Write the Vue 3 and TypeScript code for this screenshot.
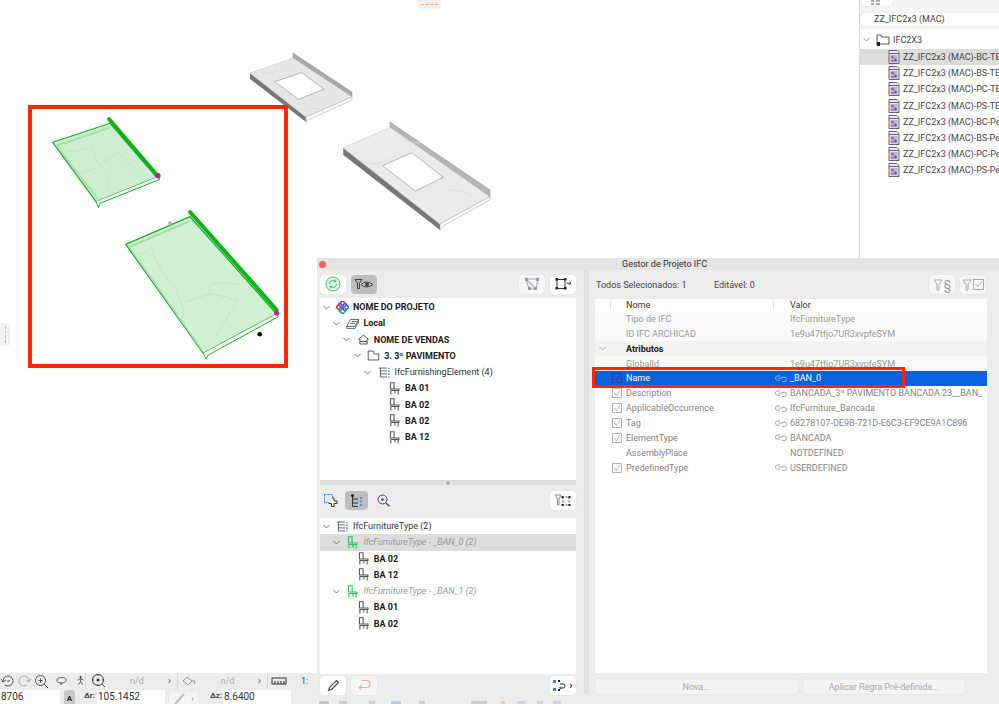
<template>
  <div class="desktop">
    <!-- svg sprites -->
    <svg class="sprites" width="0" height="0">
      <defs>
        <symbol id="i-chair" viewBox="0 0 16 16">
          <path d="M3 1h4.500v7.500H3zM3 8.500h10.500v2H3M3.500 10.500v5M12.500 10.500v5M8.500 10.500v3.500" fill="none" stroke="currentColor" stroke-width="1.300" />
        </symbol>
        <symbol id="i-type" viewBox="0 0 16 16">
          <path d="M1 2.500h10M3 2.500v11h8M3 6h8M3 9.700h8" fill="none" stroke="#555" stroke-width="1.100" />
          <path d="M13.500 2v12" fill="none" stroke="#2b7de9" stroke-width="1.600" stroke-dasharray="2 1.500" />
        </symbol>
        <symbol id="i-land" viewBox="0 0 16 16">
          <path d="M1 11.500 5.500 3h10L11 11.500zM1 11.500v2.500h10l4.500-8V3M5 8h6M7 5.500h6" fill="none" stroke="#444" stroke-width="1" />
        </symbol>
        <symbol id="i-build" viewBox="0 0 16 16">
          <path d="M1.500 8 8 2.500 14.500 8M3.500 7v6.500h9V7M3.500 10.500h9" fill="none" stroke="#444" stroke-width="1.100" />
        </symbol>
        <symbol id="i-floor" viewBox="0 0 16 16">
          <path d="M1.500 2.500h6l1.500 3.500h5.500v7.500h-13z" fill="none" stroke="#444" stroke-width="1.100" />
        </symbol>
        <symbol id="i-logo" viewBox="0 0 16 16">
          <rect x="1.500" y="4" width="7" height="7" rx="1.500" transform="rotate(45 5 7.500)" fill="none" stroke="#e0324b" stroke-width="2" />
          <rect x="7.500" y="4" width="7" height="7" rx="1.500" transform="rotate(45 11 7.500)" fill="none" stroke="#2767d8" stroke-width="2" />
          <rect x="4.500" y="1" width="7" height="7" rx="1.500" transform="rotate(45 8 4.500)" fill="none" stroke="#a033b8" stroke-width="2" />
          <rect x="4.500" y="7.500" width="7" height="7" rx="1.500" transform="rotate(45 8 11)" fill="none" stroke="#19a8a0" stroke-width="2" />
        </symbol>
        <symbol id="i-lib" viewBox="0 0 12 14">
          <path d="M1 .5h8l2 2v11H1z" fill="#e8e8e8" stroke="#666" stroke-width="1" />
          <path d="M1 3.500h10" stroke="#666" stroke-width="1" />
          <rect x="2.500" y="5" width="7" height="7.500" fill="#b9b4d8" />
          <circle cx="4.500" cy="7" r="1.500" fill="#d94aa0" />
          <circle cx="7.500" cy="10" r="1.500" fill="#4a6ad9" />
          <circle cx="4.500" cy="11" r="1" fill="#d94a60" />
        </symbol>
        <symbol id="i-link" viewBox="0 0 14 8">
          <path d="M6 1H3a2.500 2.500 0 0 0 0 5h3M4 3.500h5M8 2.500h3a2.500 2.500 0 0 1 0 5H8" fill="none" stroke="currentColor" stroke-width="1" />
        </symbol>
        <symbol id="i-funnel" viewBox="0 0 10 12">
          <path d="M1 1h8L6 5.500V11H4V5.500z" fill="none" stroke="currentColor" stroke-width="1" />
        </symbol>
      </defs>
    </svg>

    <!-- 3D viewport -->
    <svg class="canvas" width="999" height="704" viewBox="0 0 999 704">
      <!-- grey counters -->
      <g>
        <path d="M293 53 352 92v5L293 58z" fill="#a9a9a9" stroke="#8f8f8f" stroke-width=".5" />
        <path d="M250 73v6l56 43v-5z" fill="#777" />
        <path d="M250 73 293 58 352 97 306 117z" fill="#e6e6e6" stroke="#c9c9c9" stroke-width=".6" />
        <path d="M306 117 352 97v3l-44 20-2 2z" fill="#fff" stroke="#aaa" stroke-width=".6" />
        <path d="M274.700 81.700 301.700 72.700 324.300 89.300 298.300 99.300z" fill="#fff" stroke="#999" stroke-width=".7" />
        <path d="M262 72q6 4 14-2M310 108q8 0 14 4" fill="none" stroke="#d6d6d6" stroke-width=".7" />
      </g>
      <g>
        <path d="M390 122 490 190v7L390 127z" fill="#b5b5b5" stroke="#8f8f8f" stroke-width=".5" />
        <path d="M343.300 148v7L440 230v-6z" fill="#777" />
        <path d="M343.300 147.700 390 127.300 490 196.700 440 224z" fill="#ebebeb" stroke="#c9c9c9" stroke-width=".6" />
        <path d="M440 224 490 196.700v3L443 226l-3 4z" fill="#fff" stroke="#aaa" stroke-width=".6" />
        <path d="M382.700 165.700 412 152.700 443.300 177.300 415.300 191z" fill="#fff" stroke="#999" stroke-width=".7" />
        <path d="M360 160q20 10 35-5M450 190q15 0 25 8M400 135q5 8 20 8" fill="none" stroke="#dcdcdc" stroke-width=".8" />
      </g>

      <!-- selected green counters -->
      <g stroke="#12b21a" fill="none" stroke-linejoin="round">
        <path d="M52.700 142.300 110 123.300 156.700 177.300 96 201.700z" fill="#cdeed0" stroke-width="1.200" />
        <path d="M56 146 110 127.500" stroke="#a4dfa8" stroke-width="2" />
        <path d="M57 146 98 199" stroke="#a4dfa8" stroke-width="1.500" />
        <path d="M66 152q14 0 26-6 2 12 8 19l18-12M100 165q12 12 8 25M118 153l22 22M70 176l26-8" stroke="#bcd8c0" stroke-width=".6" />
        <path d="M109 119 157 175" stroke-width="3.800" stroke-linecap="round" />
        <path d="M96 201.700 98.700 207.700 100 203.300 160 179.300 157 177.300" fill="#fff" stroke-width="1" />
      </g>
      <g stroke="#12b21a" fill="none" stroke-linejoin="round">
        <path d="M125.700 244.300 190 216.700 276.700 314 203.300 353.300z" fill="#d0f0d4" stroke-width="1.300" />
        <path d="M129 247 190 221" stroke="#a4dfa8" stroke-width="2" />
        <path d="M130 248 202 350" stroke="#a4dfa8" stroke-width="1.500" />
        <path d="M138 254q12-1 14-10M152 250q8 22 24 40 6 14 8 22M186 302q16-6 24-8 14 2 28 6l-22 36M210 294q-2-8 2-10 10-2 28 0M184 312l-4 16" stroke="#bed9c2" stroke-width=".6" />
        <path d="M190 212 276.700 310" stroke-width="4" stroke-linecap="round" />
        <path d="M203.300 353.300 206 359.300 208.300 355 278.300 316.700 276.700 314" fill="#fff" stroke-width="1" />
      </g>
      <circle cx="158" cy="175.700" r="2.600" fill="#c813b8" />
      <circle cx="276.700" cy="313" r="2.600" fill="#c813b8" />
      <circle cx="259.700" cy="334.300" r="2.300" fill="#000" />
      <circle cx="170" cy="223.300" r="2" fill="#bbb" />
    </svg>

    <div class="handle handle-top"><span></span></div>
    <div class="handle handle-left"><span></span></div>

    <!-- library navigator, top right -->
    <aside class="navigator">
      <div class="nav-head">
        <div class="nav-btn">
          <svg width="10" height="6" viewBox="0 0 10 6"><path d="M0 1h3M0 4h3M5 1h4M5 4h4" stroke="#555" fill="none" /></svg>
        </div>
        <div class="nav-search">ZZ_IFC2x3 (MAC)</div>
      </div>
      <div class="nav-folder">
        <svg class="chev" width="7" height="5" viewBox="0 0 7 5"><path d="M.5 1 3.500 4 6.500 1" fill="none" stroke="#888" /></svg>
        <svg class="folder" width="14" height="14" viewBox="0 0 14 14"><path d="M1 2h4l1 2h7v7H3M1 2v10" fill="none" stroke="#555" /><rect x="1" y="9" width="3" height="4" fill="#222" /></svg>
        <span>IFC2X3</span>
      </div>
      <div v-for="(lib, i) in libraries" :key="lib" class="nav-row" :class="{ picked: i === 0 }">
        <svg class="nav-lib" width="12" height="14"><use href="#i-lib" /></svg>
        <span>{{ lib }}</span>
      </div>
    </aside>

    <!-- bottom left status panel -->
    <div class="status">
      <div class="status-top">
        <div class="st-group">
          <svg width="15" height="14" viewBox="0 0 15 14"><path d="M3 7a5 5 0 1 1 2 4M1 5l2 3 3-2M7 7h3" fill="none" stroke="#555" /></svg>
          <svg width="15" height="14" viewBox="0 0 15 14"><path d="M12 7a5 5 0 1 0-2 4M14 5l-2 3-3-2" fill="none" stroke="#aaa" /></svg>
          <svg width="15" height="14" viewBox="0 0 15 14"><circle cx="6.500" cy="6.500" r="5" fill="none" stroke="#555" /><path d="M10 10l4 4M4.500 6.500h4M6.500 4.500v4" fill="none" stroke="#555" /></svg>
        </div>
        <div class="st-group st-second">
          <svg width="14" height="12" viewBox="0 0 14 12"><ellipse cx="7" cy="5" rx="6" ry="3.500" fill="none" stroke="#444" /><path d="M5 8l2 3 1-3" fill="none" stroke="#444" /></svg>
          <svg width="12" height="13" viewBox="0 0 12 13"><circle cx="6" cy="2" r="1.300" fill="#333" /><path d="M6 4v4L3 12M6 8l3 4M2 6l4-2 4 2" fill="none" stroke="#333" /></svg>
        </div>
        <div class="st-group st-third">
          <svg width="15" height="15" viewBox="0 0 15 15"><circle cx="7" cy="7" r="5.500" fill="none" stroke="#444" /><circle cx="7" cy="7" r="1.500" fill="#333" /><path d="M11 11l3 3M7 1v2M7 11v2M1 7h2M11 7h2" stroke="#444" fill="none" /></svg>
          <span class="nd">n/d</span>
          <span class="more">›</span>
        </div>
        <div class="st-group st-fourth">
          <svg width="15" height="12" viewBox="0 0 15 12"><path d="M1 6l4-4 5 4-4 4zM10 6h3l-1 3" fill="none" stroke="#999" /></svg>
          <span class="nd">n/d</span>
          <span class="more">›</span>
        </div>
        <div class="st-group st-fifth">
          <svg width="16" height="8" viewBox="0 0 16 8"><rect x="1" y="1" width="14" height="6" fill="none" stroke="#333" /><path d="M4 4v3M7 4v3M10 4v3M13 4v3" stroke="#333" /></svg>
          <span class="scale">1:</span>
        </div>
      </div>
      <div class="status-low">
        <div class="st-field st-first">8706</div>
        <div class="st-a">A</div>
        <span class="st-label">Δr:</span>
        <div class="st-field st-wide">105.1452</div>
        <div class="st-tool">
          <svg width="12" height="12" viewBox="0 0 12 12"><path d="M1 11 10 1" stroke="#bbb" stroke-width="2" /></svg>
          <span>›</span>
        </div>
        <span class="st-label">Δz:</span>
        <div class="st-field st-wide">8.6400</div>
      </div>
    </div>

    <!-- IFC project manager -->
    <section class="manager">
      <header class="manager-title">
        <i class="close-dot"></i>
        <span>Gestor de Projeto IFC</span>
      </header>
      <div class="manager-body">
        <div class="left-pane">
          <div class="toolbar">
            <button class="tool">
              <svg width="16" height="16" viewBox="0 0 16 16"><circle cx="8" cy="8" r="7" fill="#e7f8ea" stroke="#3cc46a" /><path d="M4.500 8a3.500 3.500 0 0 1 6-2.500M11.500 8a3.500 3.500 0 0 1-6 2.500M10.700 3.500v2.200H8.500M5.300 12.500v-2.200h2.200" fill="none" stroke="#3cc46a" /></svg>
            </button>
            <button class="tool pressed">
              <svg width="20" height="10" viewBox="0 0 20 10"><path d="M1 .5h7L5.500 4v5.500h-2V4z" fill="none" stroke="#444" /><path d="M7 5.500q5-5 12 0-7 5-12 0z" fill="none" stroke="#444" /><circle cx="13" cy="5.500" r="2" fill="#444" /></svg>
            </button>
            <div class="spacer"></div>
            <button class="tool dim">
              <svg width="16" height="14" viewBox="0 0 16 14"><path d="M2 2h12l-2 10H5z" fill="none" stroke="#aaa" /><path d="M2 2l9 9" stroke="#9dbcf0" stroke-width="1.500" /><g fill="#999"><rect x="1" y="1" width="3" height="3" /><rect x="12" y="1" width="3" height="3" /><rect x="4" y="10" width="3" height="3" /><rect x="10" y="10" width="3" height="3" /></g></svg>
            </button>
            <button class="tool">
              <svg width="18" height="14" viewBox="0 0 18 14"><path d="M3 2.500h9M3 11.500h9M3 2.500v9M11 2.500v9" fill="none" stroke="#333" /><g fill="#222"><rect x="1.500" y="1" width="2.500" height="2.500" /><rect x="10" y="1" width="2.500" height="2.500" /><rect x="1.500" y="10" width="2.500" height="2.500" /><rect x="10" y="10" width="2.500" height="2.500" /></g><path d="M13 6q2 2 4 0M15.500 5l1.500 1-1 1.500" fill="none" stroke="#333" /></svg>
            </button>
          </div>
          <div class="tree tree-top">
            <div v-for="row in topTree" :key="row.key" class="tree-row" :style="{ paddingLeft: row.level * 10.4 + 'px' }">
              <span class="tree-chev">
                <svg v-if="row.open" width="7" height="5" viewBox="0 0 7 5"><path d="M.5 1 3.500 4 6.500 1" fill="none" stroke="#777" /></svg>
              </span>
              <span class="tree-icon"><svg width="13" height="13"><use :href="'#' + row.icon" /></svg></span>
              <span :class="row.bold ? 'strong' : 'plain'">{{ row.label }}</span>
            </div>
          </div>
          <div class="split-bar"><i></i></div>
          <div class="toolbar toolbar-low">
            <button class="tool flat">
              <svg width="15" height="15" viewBox="0 0 15 15"><rect x="1.500" y="1.500" width="8" height="8" fill="none" stroke="#2b7de9" stroke-dasharray="2 1" /><path d="M9 5h2v3h3v2.500h-3v3H8.500v-3h-3" fill="#fff" stroke="#333" /></svg>
            </button>
            <button class="tool pressed small">
              <svg width="13" height="14" viewBox="0 0 13 14"><path d="M2.500 1v11.500H8M2.500 5H8M2.500 9H8" fill="none" stroke="#333" /><circle cx="2.500" cy="1.500" r="1.500" fill="#222" /><path d="M11 3v9" stroke="#2b7de9" stroke-width="1.500" stroke-dasharray="2 1.500" /></svg>
            </button>
            <button class="tool flat">
              <svg width="13" height="13" viewBox="0 0 13 13"><circle cx="5.500" cy="5.500" r="4.500" fill="none" stroke="#444" /><circle cx="5.500" cy="5.500" r="1.500" fill="#2b7de9" /><path d="M9 9l3.500 3.500" stroke="#444" stroke-width="1.300" /></svg>
            </button>
            <div class="spacer"></div>
            <button class="tool">
              <svg width="18" height="14" viewBox="0 0 18 14"><path d="M1 1h6L5 5v6H3.500V5z" fill="none" stroke="#888" /><path d="M8 3h8M8 11h8M9 3v8M15 3v8" fill="none" stroke="#444" stroke-dasharray="2 1.500" /><g fill="#222"><rect x="7.500" y="2" width="2" height="2" /><rect x="14.500" y="2" width="2" height="2" /><rect x="7.500" y="10" width="2" height="2" /><rect x="14.500" y="10" width="2" height="2" /></g></svg>
            </button>
          </div>
          <div class="tree tree-low">
            <div v-for="row in lowTree" :key="row.key" class="tree-row" :class="{ picked: row.picked }" :style="{ paddingLeft: row.level * 10.4 + 'px' }">
              <span class="tree-chev">
                <svg v-if="row.open" width="7" height="5" viewBox="0 0 7 5"><path d="M.5 1 3.500 4 6.500 1" fill="none" stroke="#777" /></svg>
              </span>
              <span class="tree-icon" :class="{ green: row.green }"><svg width="13" height="13"><use :href="'#' + row.icon" /></svg></span>
              <span :class="row.italic ? 'ghost' : row.bold ? 'strong' : 'plain'">{{ row.label }}</span>
            </div>
          </div>
          <div class="toolbar toolbar-foot">
            <button class="tool">
              <svg width="13" height="13" viewBox="0 0 13 13"><path d="M1.500 11.500 2.500 8.500 9.500 1.500 11.500 3.500 4.500 10.500z" fill="none" stroke="#444" stroke-width="1.100" /></svg>
            </button>
            <button class="tool dim">
              <svg width="14" height="13" viewBox="0 0 14 13"><path d="M5 1.500h4.500a3.500 3.500 0 0 1 0 7H2M4.500 6 2 8.500 4.500 11" fill="none" stroke="#f5a89a" stroke-width="1.100" /></svg>
            </button>
            <div class="spacer"></div>
            <button class="tool">
              <svg width="13" height="13" viewBox="0 0 13 13"><g fill="#2b7de9"><rect x="0" y="1" width="3" height="3" /><rect x="0" y="9" width="3" height="3" /></g><g fill="#222"><rect x="5" y="1" width="2" height="2" /><rect x="5" y="10" width="2" height="2" /></g><path d="M7 5h3a2 2 0 0 1 0 4H7M8 10l-1.500-1L8 7.500" fill="none" stroke="#333" /></svg>
              <span class="tool-more">›</span>
            </button>
          </div>
        </div>

        <div class="divider"></div>

        <div class="right-pane">
          <div class="sel-bar">
            <span class="sel-all">Todos Selecionados: 1</span>
            <span class="sel-edit">Editável: 0</span>
            <div class="spacer"></div>
            <button class="tool dim">
              <svg class="tone" width="10" height="12"><use href="#i-funnel" /></svg>
              <span class="para">§</span>
            </button>
            <button class="tool dim">
              <svg class="tone" width="10" height="12"><use href="#i-funnel" /></svg>
              <svg class="tone" width="11" height="11" viewBox="0 0 11 11"><rect x=".5" y=".5" width="10" height="10" fill="none" stroke="currentColor" /><path d="M2.500 5 5 8l4-6" fill="none" stroke="currentColor" /></svg>
            </button>
          </div>
          <div class="table">
            <div class="t-row t-head">
              <span></span>
              <span class="t-name">Nome</span>
              <span></span>
              <span class="t-val">Valor</span>
            </div>
            <div v-for="row in rows" :key="row.name" class="t-row" :class="row.kind">
              <span class="t-check">
                <svg v-if="row.kind === 'group'" width="7" height="5" viewBox="0 0 7 5"><path d="M.5 1 3.500 4 6.500 1" fill="none" stroke="#aaa" /></svg>
                <svg v-else-if="row.checked" class="box" width="10" height="10" viewBox="0 0 9 9"><rect x=".5" y=".5" width="8" height="8" fill="none" stroke="currentColor" stroke-width=".8" /><path d="M2 4.500 4 7l3-5" fill="none" stroke="currentColor" stroke-width=".8" /></svg>
              </span>
              <span class="t-name">{{ row.name }}</span>
              <span class="t-link"><svg v-if="row.linked" width="12" height="7"><use href="#i-link" /></svg></span>
              <span class="t-val">{{ row.value }}</span>
            </div>
          </div>
          <div class="actions">
            <button class="act act-new">Nova...</button>
            <button class="act act-rule">Aplicar Regra Pré-definida...</button>
          </div>
        </div>
      </div>
      <div class="crumbs">
        <i v-for="(c, i) in crumbs" :key="i" :style="{ width: c.w + 'px', marginLeft: c.gap + 'px', background: c.color }"></i>
      </div>
    </section>

    <!-- red annotations -->
    <div class="mark mark-big"></div>
    <div class="mark mark-name"></div>
  </div>
</template>

<script setup lang="ts">
interface TreeRow {
  key: string
  level: number
  icon: string
  label: string
  open?: boolean
  bold?: boolean
  italic?: boolean
  green?: boolean
  picked?: boolean
}

interface PropRow {
  name: string
  value: string
  kind: string
  checked?: boolean
  linked?: boolean
}

const libraries = ['BC-TE', 'BS-TE', 'PC-TE', 'PS-TE', 'BC-Pe', 'BS-Pe', 'PC-Pe', 'PS-Pe'].map(
  (s) => `ZZ_IFC2x3 (MAC)-${s}`
)

const topTree: TreeRow[] = [
  { key: 'a', level: 0, icon: 'i-logo', label: 'NOME DO PROJETO', open: true, bold: true },
  { key: 'b', level: 1, icon: 'i-land', label: 'Local', open: true, bold: true },
  { key: 'c', level: 2, icon: 'i-build', label: 'NOME DE VENDAS', open: true, bold: true },
  { key: 'd', level: 3, icon: 'i-floor', label: '3. 3º PAVIMENTO', open: true, bold: true },
  { key: 'e', level: 4, icon: 'i-type', label: 'IfcFurnishingElement (4)', open: true },
  { key: 'f', level: 5, icon: 'i-chair', label: 'BA 01', bold: true },
  { key: 'g', level: 5, icon: 'i-chair', label: 'BA 02', bold: true },
  { key: 'h', level: 5, icon: 'i-chair', label: 'BA 02', bold: true },
  { key: 'i', level: 5, icon: 'i-chair', label: 'BA 12', bold: true }
]

const lowTree: TreeRow[] = [
  { key: 'a', level: 0, icon: 'i-type', label: 'IfcFurnitureType (2)', open: true },
  { key: 'b', level: 1, icon: 'i-chair', label: 'IfcFurnitureType - _BAN_0 (2)', open: true, italic: true, green: true, picked: true },
  { key: 'c', level: 2, icon: 'i-chair', label: 'BA 02', bold: true },
  { key: 'd', level: 2, icon: 'i-chair', label: 'BA 12', bold: true },
  { key: 'e', level: 1, icon: 'i-chair', label: 'IfcFurnitureType - _BAN_1 (2)', open: true, italic: true, green: true },
  { key: 'f', level: 2, icon: 'i-chair', label: 'BA 01', bold: true },
  { key: 'g', level: 2, icon: 'i-chair', label: 'BA 02', bold: true }
]

const rows: PropRow[] = [
  { name: 'Tipo de IFC', value: 'IfcFurnitureType', kind: 'info' },
  { name: 'ID IFC ARCHICAD', value: '1e9u47tfjo7UR3xvpfeSYM', kind: 'info' },
  { name: 'Atributos', value: '', kind: 'group' },
  { name: 'GlobalId', value: '1e9u47tfjo7UR3xvpfeSYM', kind: 'info' },
  { name: 'Name', value: '_BAN_0', kind: 'selected', checked: true, linked: true },
  { name: 'Description', value: 'BANCADA_3º PAVIMENTO BANCADA 23__BAN_', kind: 'attr', checked: true, linked: true },
  { name: 'ApplicableOccurrence', value: 'IfcFurniture_Bancada', kind: 'attr', checked: true, linked: true },
  { name: 'Tag', value: '68278107-DE9B-721D-E6C3-EF9CE9A1C896', kind: 'attr', checked: true, linked: true },
  { name: 'ElementType', value: 'BANCADA', kind: 'attr', checked: true, linked: true },
  { name: 'AssemblyPlace', value: 'NOTDEFINED', kind: 'attr' },
  { name: 'PredefinedType', value: 'USERDEFINED', kind: 'attr', checked: true, linked: true }
]

// what peeks out under the window
const crumbs = [
  { w: 10, gap: 2, color: '#c4c4c4' },
  { w: 8, gap: 10, color: '#ccc' },
  { w: 6, gap: 22, color: '#d0d0d0' },
  { w: 10, gap: 16, color: '#b9cbe4' },
  { w: 6, gap: 18, color: '#ccc' },
  { w: 16, gap: 46, color: '#ccc' },
  { w: 4, gap: 14, color: '#eecba8' },
  { w: 8, gap: 12, color: '#c6d6ea' },
  { w: 6, gap: 12, color: '#c6d6ea' },
  { w: 8, gap: 10, color: '#d4d4d4' }
]
</script>

<style>
html,
body {
  margin: 0;
  background: #fff;
}
</style>

<style scoped>
.desktop {
  position: relative;
  width: 999px;
  height: 704px;
  overflow: hidden;
  background: #fff;
  font-family: Roboto, "Liberation Sans", Arial, sans-serif;
  font-size: 9px;
  color: #222;
}

.sprites {
  position: absolute;
}

.canvas {
  position: absolute;
  left: 0;
  top: 0;
}

button {
  font-family: inherit;
  padding: 0;
}

.spacer {
  flex: 1;
}

/* small orange dashed handles on the canvas */
.handle {
  position: absolute;
  background: #f1f1f1;
  display: flex;
  align-items: center;
  justify-content: center;
}

.handle-top {
  left: 418px;
  top: 0;
  width: 23px;
  height: 9px;
  border-radius: 0 0 3px 3px;
}

.handle-top span {
  width: 17px;
  border-top: 1px dashed #f4a868;
}

.handle-left {
  left: 0;
  top: 323px;
  width: 10px;
  height: 23px;
  border-radius: 0 3px 3px 0;
}

.handle-left span {
  height: 17px;
  border-left: 1px dashed #f4a868;
}

/* navigator */
.navigator {
  position: absolute;
  left: 859px;
  top: 0;
  width: 140px;
  height: 258px;
  border-left: 1px solid #d9d9d9;
  background: #fff;
  box-sizing: border-box;
  overflow: hidden;
  white-space: nowrap;
}

.nav-head {
  background: #f5f5f5;
  height: 30px;
  box-sizing: border-box;
  padding: 0 0 0 1px;
}

.nav-btn {
  width: 32px;
  height: 6px;
  background: #fff;
  border-radius: 0 0 4px 4px;
  box-shadow: 0 0 1px #bbb;
  display: flex;
  align-items: flex-end;
  padding-left: 10px;
  box-sizing: border-box;
  overflow: hidden;
}

.nav-search {
  margin-top: 7px;
  height: 13px;
  line-height: 13px;
  background: #fff;
  border-radius: 4px;
  box-shadow: 0 0 1px #aaa;
  padding-left: 13px;
  width: 150px;
  color: #444;
}

.nav-folder {
  display: flex;
  align-items: center;
  height: 19px;
  color: #444;
}

.chev {
  margin-left: 3px;
  flex: none;
}

.folder {
  margin: 0 3px 0 6px;
  flex: none;
}

.nav-row {
  display: flex;
  align-items: center;
  height: 16.200px;
  padding-left: 28px;
  gap: 3px;
  color: #444;
}

.nav-lib {
  flex: none;
}

.nav-row.picked {
  background: #dcdcdc;
}

/* status panel */
.status {
  position: absolute;
  left: 0;
  top: 673px;
  width: 317px;
  height: 31px;
  background: #ececec;
  overflow: hidden;
}

.status-top {
  display: flex;
  align-items: center;
  height: 15px;
}

.st-group {
  display: flex;
  align-items: center;
  height: 15px;
  flex: none;
}

.st-group:first-child {
  width: 50px;
  gap: 2px;
}

.st-second {
  width: 35px;
  gap: 9px;
  padding-left: 6px;
  box-sizing: border-box;
}

.st-third {
  width: 92px;
  border-left: 1px solid #d8d8d8;
  padding-left: 5px;
  box-sizing: border-box;
}

.st-fourth {
  width: 90px;
  border-left: 1px solid #d8d8d8;
  padding-left: 4px;
  box-sizing: border-box;
}

.st-fifth {
  width: 50px;
  border-left: 1px solid #d8d8d8;
  padding-left: 3px;
  box-sizing: border-box;
}

.nd {
  color: #aaa;
  flex: 1;
  text-align: center;
}

.more {
  color: #666;
  font-size: 11px;
  padding-right: 6px;
}

.scale {
  margin-left: 14px;
  color: #444;
}

.status-low {
  display: flex;
  align-items: flex-start;
  padding-top: 2px;
}

.st-field {
  height: 14px;
  line-height: 13px;
  background: #fff;
  box-sizing: border-box;
  padding-left: 1px;
  color: #333;
  font-size: 10px;
}

.st-first {
  width: 60px;
}

.st-wide {
  width: 68px;
}

.st-a {
  width: 11px;
  height: 14px;
  margin: 0 9px 0 4px;
  background: #c9c9c9;
  border-radius: 3px 3px 0 0;
  font-weight: 700;
  font-size: 8px;
  text-align: center;
  line-height: 17px;
}

.st-label {
  width: 13px;
  font-weight: 700;
  font-size: 8px;
  line-height: 11px;
  color: #444;
}

.st-tool {
  width: 30px;
  height: 14px;
  margin: 2px 11px 0 4px;
  background: #f4f4f4;
  border-radius: 4px;
  display: flex;
  align-items: center;
  justify-content: center;
  gap: 5px;
  color: #888;
}

/* manager window */
.manager {
  position: absolute;
  left: 317px;
  top: 258px;
  width: 682px;
  height: 446px;
  background: #ececec;
}

.manager-title {
  position: relative;
  height: 12px;
  line-height: 12px;
  background: #e4e4e4;
  padding-left: 305px;
  color: #333;
}

.close-dot {
  position: absolute;
  left: 2px;
  top: 2.500px;
  width: 7px;
  height: 7px;
  border-radius: 50%;
  background: #f9605a;
}

.manager-body {
  display: flex;
  height: 426px;
  padding-left: 3px;
}

.left-pane {
  width: 256px;
  flex: none;
  display: flex;
  flex-direction: column;
}

.toolbar {
  display: flex;
  align-items: center;
  height: 28px;
  gap: 5px;
  flex: none;
}

.toolbar-low {
  height: 19px;
  margin: 6px 0 8px;
}

.toolbar-foot {
  height: 19px;
  margin-top: 2px;
}

.tool {
  width: 26px;
  height: 19px;
  border: 0;
  border-radius: 4px;
  background: #fff;
  display: flex;
  align-items: center;
  justify-content: center;
  gap: 1px;
  box-shadow: 0 0 1px #c4c4c4;
  color: #aaa;
}

.tool.pressed {
  background: #bdbdbd;
  box-shadow: none;
}

.tool.small {
  width: 23px;
}

.tool.dim {
  background: #f6f6f6;
}

.tool.flat {
  background: transparent;
  box-shadow: none;
  width: 20px;
}

.tool-more {
  color: #222;
  font-size: 11px;
  font-weight: 700;
  margin-left: 2px;
  line-height: 10px;
}

.para {
  font-size: 12px;
  color: #999;
}

.tree {
  background: #fff;
  box-sizing: border-box;
  flex: none;
}

.tree-top {
  height: 182px;
  padding-top: 1px;
}

.tree-low {
  height: 156px;
}

.tree-row {
  display: flex;
  align-items: center;
  height: 16.250px;
  white-space: nowrap;
}

.tree-row.picked {
  background: #dcdcdc;
}

.tree-chev {
  width: 12px;
  display: flex;
  justify-content: center;
  flex: none;
}

.tree-icon {
  width: 21px;
  display: flex;
  justify-content: center;
  flex: none;
  color: #555;
}

.tree-icon.green {
  color: #26bf55;
}

.strong {
  font-weight: 700;
  color: #1a1a1a;
}

.plain {
  color: #333;
}

.ghost {
  font-style: italic;
  color: #999;
}

.split-bar {
  height: 5px;
  background: #dedede;
  display: flex;
  align-items: center;
  justify-content: center;
  flex: none;
}

.split-bar i {
  width: 4px;
  height: 4px;
  border-radius: 50%;
  background: #aaa;
}

.divider {
  width: 5px;
  margin-left: 8px;
  flex: none;
  background: #e0e0e0;
  height: 424px;
}

.right-pane {
  width: 392px;
  margin-left: 6px;
  flex: none;
  display: flex;
  flex-direction: column;
}

.sel-bar {
  display: flex;
  align-items: center;
  height: 29px;
  flex: none;
  gap: 5px;
  margin-right: 1px;
  color: #444;
}

.sel-all {
  width: 114px;
  padding-left: 1px;
  box-sizing: border-box;
  flex: none;
}

.table {
  height: 374px;
  background: #fff;
  flex: none;
}

.t-row {
  display: grid;
  grid-template-columns: 31px 149px 15px 1fr;
  align-items: center;
  height: 14.880px;
  white-space: nowrap;
  color: #858585;
}

.t-row.t-head {
  height: 12.500px;
  color: #333;
  background: #fff;
  background-image: linear-gradient(#e2e2e2, #e2e2e2), linear-gradient(#e2e2e2, #e2e2e2);
  background-size: 1px 9px;
  background-position: 15px 2px, 178px 2px;
  background-repeat: no-repeat;
}

.t-check {
  display: flex;
  justify-content: flex-end;
  padding-right: 4px;
}

.t-link {
  display: flex;
  align-items: center;
}

.info {
  background: #fafafa;
  color: #999;
}

.group {
  background: #f2f2f2;
  color: #222;
  font-weight: 700;
}

.group .t-check {
  justify-content: flex-start;
  padding-left: 4px;
}

.selected {
  background: #0a62e0;
  color: #fff;
}

.selected .box {
  color: #2a3f8f;
}

.selected .t-link {
  color: #9fc0ef;
}

.attr .box {
  color: #aaa;
}

.attr .t-link {
  color: #999;
}

.actions {
  display: flex;
  gap: 5px;
  margin-top: 6px;
}

.act {
  height: 15px;
  border: 0;
  border-radius: 4px;
  background: #f3f3f3;
  box-shadow: 0 0 1px #ccc;
  color: #aaa;
  font-size: 9px;
}

.act-new {
  width: 203px;
}

.act-rule {
  width: 162px;
}

.crumbs {
  display: flex;
  height: 3px;
  margin-top: 5px;
}

/* red annotation frames */
.mark {
  position: absolute;
  box-sizing: border-box;
  border: 4px solid #ff2600;
}

.mark-big {
  left: 28px;
  top: 105px;
  width: 260px;
  height: 263px;
}

.mark-name {
  left: 592px;
  top: 367px;
  width: 313px;
  height: 21px;
  border-width: 3px;
}
</style>
